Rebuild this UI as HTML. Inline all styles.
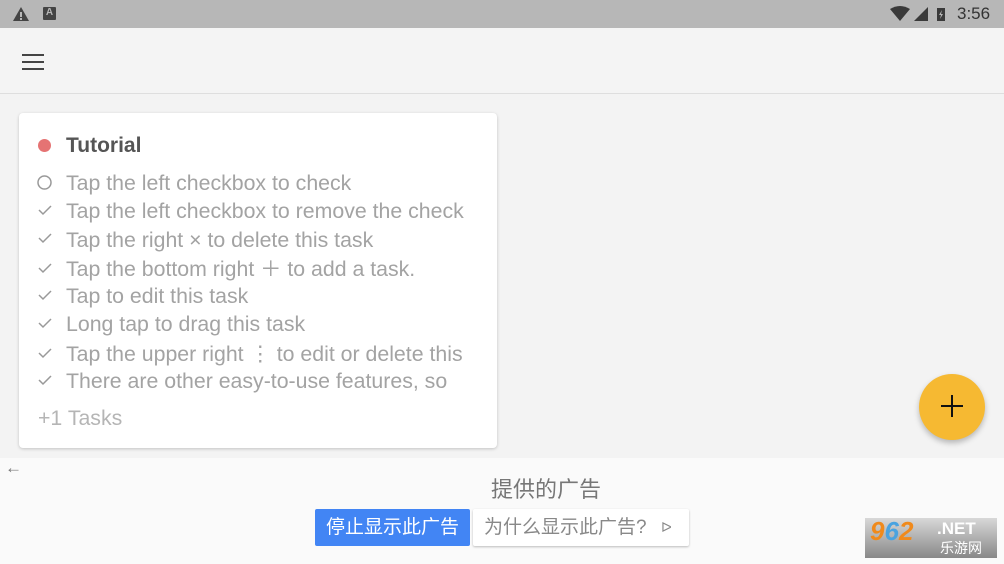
<!DOCTYPE html>
<html><head><meta charset="utf-8"><style>
*{margin:0;padding:0;box-sizing:border-box}
body{width:1004px;height:564px;overflow:hidden;background:#f3f3f3;font-family:"Liberation Sans","Noto Sans CJK SC",sans-serif;position:relative}
.sb{position:absolute;left:0;top:0;width:1004px;height:28px;background:#b7b7b7}
.tb{position:absolute;left:0;top:28px;width:1004px;height:66px;background:#f4f4f4;border-bottom:1px solid #dedede}
.card{position:absolute;left:19px;top:113px;width:478px;height:335px;background:#fff;border-radius:4px;box-shadow:0 1px 3px rgba(0,0,0,.2)}
.row{position:absolute;left:47px;font-size:21.3px;color:#a3a3a3;white-space:nowrap;line-height:24px}
.ad{position:absolute;left:0;top:458px;width:1004px;height:106px;background:#fafafa}
</style></head><body>
<div class="sb">
<svg style="position:absolute;left:12px;top:6px" width="18" height="16"><path d="M9 1L17 15H1Z" fill="#444"/><rect x="8" y="6" width="2" height="5" fill="#b7b7b7"/><rect x="8" y="12" width="2" height="2" fill="#b7b7b7"/></svg>
<div style="position:absolute;left:43px;top:7px;width:13px;height:13px;background:#444;border-radius:1px;color:#b7b7b7;font-size:10px;font-weight:bold;text-align:center;line-height:12px">A</div>
<svg style="position:absolute;left:890px;top:6px" width="60" height="16"><path d="M0 3Q10 -3 20 3L10 15Z" fill="#3a3a3a"/><path d="M24 15L38 1V15Z" fill="#3a3a3a"/><rect x="47" y="2" width="8" height="13" fill="#3a3a3a"/><path d="M52 4L49 9H51L50 13L53 8H51Z" fill="#b7b7b7"/></svg>
<div style="position:absolute;left:957px;top:4px;font-size:17px;color:#333">3:56</div>
</div>
<div class="tb">
<div style="position:absolute;left:22px;top:26px;width:22px;height:2px;background:#444"></div>
<div style="position:absolute;left:22px;top:33px;width:22px;height:2px;background:#444"></div>
<div style="position:absolute;left:22px;top:40px;width:22px;height:2px;background:#444"></div>
</div>
<div class="card">
<div style="position:absolute;left:19px;top:26px;width:13px;height:13px;border-radius:50%;background:#e57373"></div>
<div style="position:absolute;left:47px;top:21px;font-size:21px;font-weight:bold;color:#555">Tutorial</div>
<div class="row" style="top:58px"><svg style="position:absolute;left:-29px;top:4px" width="15" height="15"><circle cx="7.5" cy="7.5" r="6.5" fill="none" stroke="#999" stroke-width="1.5"/></svg>Tap the left checkbox to check</div>
<div class="row" style="top:86px">Tap the left checkbox to remove the check</div>
<div class="row" style="top:115px">Tap the right × to delete this task</div>
<div class="row" style="top:144px">Tap the bottom right ＋ to add a task.</div>
<div class="row" style="top:171px">Tap to edit this task</div>
<div class="row" style="top:199px">Long tap to drag this task</div>
<div class="row" style="top:229px">Tap the upper right ⋮ to edit or delete this</div>
<div class="row" style="top:256px">There are other easy-to-use features, so</div>
<div class="row" style="top:293px;left:19px;color:#b5b5b5">+1 Tasks</div>
<svg style="position:absolute;left:18px;top:0" width="16" height="280">
<g fill="none" stroke="#999" stroke-width="1.5">
<path d="M2 97l4 4 8-8"/><path d="M2 125l4 4 8-8"/><path d="M2 155l4 4 8-8"/><path d="M2 182l4 4 8-8"/><path d="M2 210l4 4 8-8"/><path d="M2 240l4 4 8-8"/><path d="M2 267l4 4 8-8"/></g></svg>
</div>
<div style="position:absolute;left:919px;top:374px;width:66px;height:66px;border-radius:50%;background:#f6b932;box-shadow:0 3px 6px rgba(0,0,0,.25)"></div>
<div style="position:absolute;left:941px;top:405px;width:22px;height:2px;background:#111"></div>
<div style="position:absolute;left:951px;top:395px;width:2px;height:22px;background:#111"></div>
<div class="ad">
<div style="position:absolute;left:5px;top:0px;font-size:17px;color:#777">←</div>
<div style="position:absolute;left:491px;top:14px;font-size:22px;color:#777">提供的广告</div>
<div style="position:absolute;left:315px;top:51px;width:155px;height:37px;background:#4285f4;border-radius:2px;color:#fff;font-size:19px;line-height:37px;text-align:center">停止显示此广告</div>
<div style="position:absolute;left:473px;top:51px;width:216px;height:37px;background:#fff;border-radius:2px;box-shadow:0 1px 2px rgba(0,0,0,.25);color:#888;font-size:19px;line-height:37px;padding-left:11px">为什么显示此广告?<span style="position:absolute;left:188px;font-size:14px">ᐅ</span></div>
<div style="position:absolute;left:865px;top:60px;width:132px;height:40px;background:linear-gradient(#d8d8d8,#888);"></div>
<div style="position:absolute;left:870px;top:58px;font-size:26px;font-weight:bold;font-style:italic;color:#f08a1c">9<span style="color:#4aa3e0">6</span>2</div>
<div style="position:absolute;left:937px;top:61px;font-size:17px;font-weight:bold;color:#fff">.NET</div>
<div style="position:absolute;left:940px;top:80px;font-size:14px;color:#fff">乐游网</div>
</div>
</body></html>
